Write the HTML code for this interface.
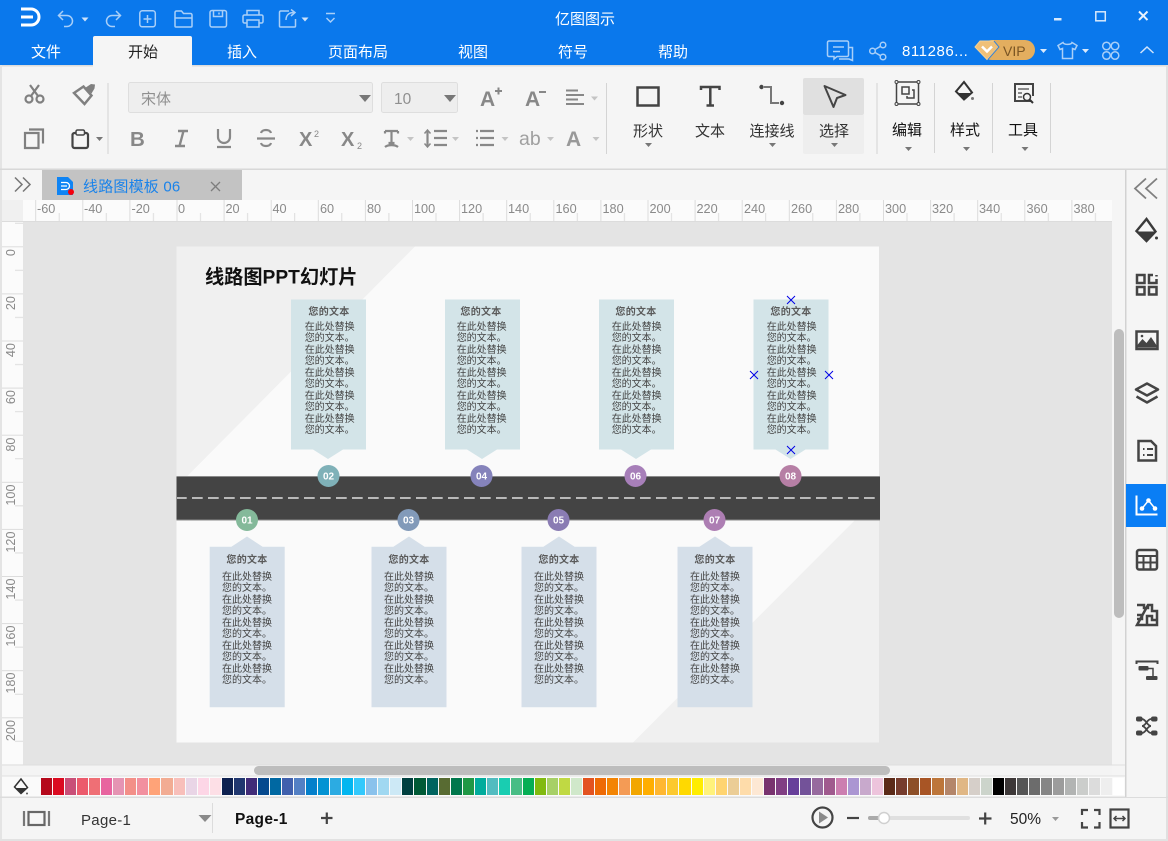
<!DOCTYPE html>
<html lang="zh">
<head>
<meta charset="utf-8">
<title>亿图图示</title>
<style>
html,body{margin:0;padding:0;width:1168px;height:841px;overflow:hidden;background:#f5f5f5}
body{position:relative;font-family:"Liberation Sans","Noto Sans CJK SC",sans-serif}
svg{position:absolute;left:0;top:0}
svg text{font-family:"Liberation Sans","Noto Sans CJK SC",sans-serif}
.c{position:absolute;width:76px;color:#444;font-size:10px;font-family:"Liberation Sans","Noto Sans CJK SC",sans-serif}
.c b{position:absolute;left:0;width:76px;text-align:center;line-height:12px;color:#5a5a5a;letter-spacing:.3px;font-weight:700}
.c p{position:absolute;margin:0;line-height:11.45px;white-space:nowrap}
.u{top:307px}.u p{top:15px;left:13.7px}
.d{top:555px}.d p{top:17px;left:13px}
.pal{position:absolute;left:41px;top:778px;width:1085px;height:18px;display:flex}
.pal i{display:block;width:11.05px;margin-right:1px;height:17px;flex:none}
</style>
</head>
<body>
<svg width="1168" height="841" viewBox="0 0 1168 841">
<defs>
<path id="a" d="M-3.5 0h7L0 4z"/>
<pattern id="hr" patternUnits="userSpaceOnUse" x="35.2" y="200" width="47.1" height="21">
<path d="M.5 0V21M24 13V21" stroke="#dcdcdc" fill="none"/>
</pattern>
<pattern id="vr" patternUnits="userSpaceOnUse" x="2" y="246.3" width="21" height="47.1">
<path d="M0 .5H21M13 24H21" stroke="#dcdcdc" fill="none"/>
</pattern>
</defs>

<!-- title bar -->
<rect width="1168" height="65" fill="#0a78ec"/>
<path d="M21 9h10a8 8 0 0 1 0 16H21M21 17h12" fill="none" stroke="#fff" stroke-width="3"/>
<g fill="none" stroke="#a9cff8" stroke-width="1.5">
<path d="M63 11l-4.500 4.500L63 20M59 15.500h8a5 5 0 0 1 0 11h-3"/>
<path d="M116 11l4.500 4.500L116 20M120 15.500h-8a5 5 0 0 0 0 11h3"/>
<rect x="139.800" y="10.800" width="15.500" height="16" rx="2.500"/><path d="M147.500 15v8M143.500 19h8"/>
<path d="M175 26V12.500a1.500 1.500 0 0 1 1.500-1.500h5l2 2.500h7a1.500 1.500 0 0 1 1.500 1.500V26a1 1 0 0 1-1 1h-15a1 1 0 0 1-1-1zM175 18h17.500"/>
<rect x="210" y="10.500" width="16.500" height="16.500" rx="2"/><path d="M213.500 10.500v6h9v-6M219 12.500v2"/>
<path d="M247 15v-4.500h12V15M247 23h-2.500a1.500 1.500 0 0 1-1.500-1.500V16.500a1.500 1.500 0 0 1 1.500-1.500h17a1.500 1.500 0 0 1 1.500 1.500v5a1.500 1.500 0 0 1-1.500 1.500H259M247 20h12v7h-12z"/>
<path d="M289 11h-8.500a1.500 1.500 0 0 0-1 1.500V26a1 1 0 0 0 1 1h14a1 1 0 0 0 1-1v-7M286 20c0-5 3-7.500 8-7.500M291 9.500l4 3-4 3.500"/>
<path d="M326 13.500h9M326.500 18l4 4 4-4"/>
</g>
<use href="#a" x="85" y="17.500" fill="#cfe3fb"/>
<use href="#a" x="305" y="17.500" fill="#cfe3fb"/>
<text x="585" y="24" text-anchor="middle" font-size="15" fill="#fff">亿图图示</text>
<rect x="1054" y="18" width="7.500" height="2.500" fill="#d8e9fc"/>
<rect x="1095.800" y="11.800" width="9.500" height="9" fill="none" stroke="#d8e9fc" stroke-width="1.500"/>
<path d="M1139 11.500l8.500 8.500M1147.500 11.500L1139 20" stroke="#e8f2fe" stroke-width="2" fill="none"/>

<!-- tabs -->
<path d="M93 38a2 2 0 0 1 2-2h95a2 2 0 0 1 2 2v27H93z" fill="#f5f5f5"/>
<g font-size="15" text-anchor="middle" fill="#fff">
<text x="46" y="57">文件</text>
<text x="143" y="57" fill="#222">开始</text>
<text x="242" y="57">插入</text>
<text x="358" y="57">页面布局</text>
<text x="473" y="57">视图</text>
<text x="573" y="57">符号</text>
<text x="673" y="57">帮助</text>
</g>
<g fill="none" stroke="#a9cff8" stroke-width="1.500">
<path d="M829 41h18a1.500 1.500 0 0 1 1.500 1.500V55a1.500 1.500 0 0 1-1.500 1.500h-10l-3 2.500v-2.500H829a1.500 1.500 0 0 1-1.500-1.500V42.500A1.500 1.500 0 0 1 829 41z"/>
<path d="M833 47h11M833 51.500h7M848.500 47.500h4v13l-3.500-1.500h-10"/>
<circle cx="872.500" cy="51" r="2.800"/><circle cx="883" cy="45" r="2.800"/><circle cx="883" cy="57" r="2.800"/>
<path d="M875 49.500l5.500-3.200M875 52.500l5.500 3.200"/>
<path d="M1063 42.500l-5 3 2 4 2.500-1v10h10v-10l2.500 1 2-4-5-3c-.8 2.500-8 2.500-9 0z"/>
<circle cx="1106.500" cy="46" r="3.800"/><circle cx="1115" cy="46" r="3.800"/><circle cx="1106.500" cy="55.500" r="3.800"/><circle cx="1115" cy="55.500" r="3.800"/>
<path d="M1140.500 53l6.500-6 6.500 6" stroke="#cfe3fb"/>
</g>
<text x="902" y="56" font-size="15" letter-spacing=".55" fill="#fff">811286...</text>
<rect x="982" y="40" width="53" height="20" rx="10" fill="#e3ae5f"/>
<path d="M975 47l5-6h14l5 6-12 12.500z" fill="#efc078" stroke="#f3d193"/>
<path d="M982 46.500l5 5 5-5" fill="none" stroke="#fff" stroke-width="2.500"/>
<path d="M994 41l5 6-11 12.500" fill="none" stroke="#3d82cf" stroke-width="1"/>
<text x="1003" y="56" font-size="14" fill="#7a5523">VIP</text>
<use href="#a" x="1043.500" y="49" fill="#dbeafc"/>
<use href="#a" x="1085.500" y="49" fill="#dbeafc"/>

<!-- ribbon -->
<rect x="0" y="65" width="1168" height="105" fill="#f5f5f5"/>
<rect x="0" y="65" width="93" height="1.500" fill="#dcdcdc"/>
<rect x="192" y="65" width="976" height="1.500" fill="#dcdcdc"/>
<rect x="0" y="65" width="2" height="776" fill="#e4e4e4"/>
<rect x="1166" y="65" width="2" height="776" fill="#e0e0e0"/>
<rect x="0" y="168.500" width="1168" height="1.500" fill="#d8d8d8"/>
<g stroke="#d4d4d4" fill="none"><path d="M108 83V154M606.500 83V154M877 83V154M934.500 83V153M992.500 83V153M1050.500 83V153"/></g>

<g fill="none" stroke="#808080" stroke-width="2.200">
<circle cx="29" cy="99" r="3.500"/><circle cx="40" cy="99" r="3.500"/>
<path d="M31 96l8-11M38 96l-8-11"/>
<path d="M25 133h13.500v15H25zM29 129.500h14v14"/>
</g>
<path d="M74 93l9.500-6.500 8 9-7 8.500z" fill="none" stroke="#808080" stroke-width="2.500"/>
<path d="M85 88l6-4 4 .5-.5 4-3 5z" fill="#808080"/>
<rect x="72.500" y="133" width="15.500" height="15" rx="2" fill="none" stroke="#444" stroke-width="2.200"/>
<rect x="76" y="130" width="8.500" height="5" rx="1.500" fill="#f5f5f5" stroke="#444" stroke-width="1.500"/>
<use href="#a" x="99.500" y="137" fill="#777"/>

<rect x="128.500" y="82.500" width="244" height="30" rx="2" fill="#eee" stroke="#dedede"/>
<rect x="381.500" y="82.500" width="76" height="30" rx="2" fill="#eee" stroke="#dedede"/>
<text x="141" y="104" font-size="15" fill="#8f8f8f">宋体</text>
<text x="394" y="104" font-size="15.500" fill="#8f8f8f">10</text>
<path d="M359 95h12l-6 7z" fill="#777"/><path d="M444 95h12l-6 7z" fill="#777"/>

<g fill="#888">
<text x="480" y="106" font-size="21" font-weight="700">A</text><path d="M495 91h7M498.500 87.500v7" stroke="#888" stroke-width="2"/>
<text x="525" y="106" font-size="21" font-weight="700">A</text><path d="M539 92h7" stroke="#888" stroke-width="2"/>
<path d="M566 90.500h12M566 95h18M566 99.500h12M566 104h18" stroke="#888" stroke-width="2"/>
<use href="#a" x="594.500" y="96.500" fill="#c4c4c4"/>
<text x="130" y="146" font-size="20.500" font-weight="700">B</text>
<path d="M178 131h10M175 146h10M183.500 131l-4 15" fill="none" stroke="#888" stroke-width="2.400"/>
<path d="M218 129v8a6 6 0 0 0 12 0v-8M217 147h14" fill="none" stroke="#888" stroke-width="2.200"/>
<path d="M271 133c-1-4-9-4-10 0M261 143c1 4 9 4 10 0M257 138.500h18" fill="none" stroke="#888" stroke-width="2.200"/>
<text x="299" y="146" font-size="20" font-weight="700">X</text><text x="314" y="137" font-size="9">2</text>
<text x="341" y="146" font-size="20" font-weight="700">X</text><text x="357" y="149" font-size="9">2</text>
<path d="M385 131h13M385 131v2.500M398 131v2.500M391.500 131v12M388.500 143h6M385 147c3-2.500 10-2.500 13 0" fill="none" stroke="#888" stroke-width="2.200"/>
<use href="#a" x="410.500" y="137" fill="#c4c4c4"/>
<path d="M434 131h13M434 138h13M434 145h13M427.500 131v15" stroke="#888" stroke-width="2.200" fill="none"/>
<path d="M424.500 133.500l3-3.500 3 3.500M424.500 143.500l3 3.500 3-3.500" stroke="#888" stroke-width="1.500" fill="none"/>
<use href="#a" x="455.500" y="137" fill="#c4c4c4"/>
<path d="M480 131h14M480 138h14M480 145h14M476 131h2M476 138h2M476 145h2" stroke="#888" stroke-width="2.200"/>
<use href="#a" x="505" y="137" fill="#c4c4c4"/>
<text x="519" y="145" font-size="19.500" fill="#a0a0a0">ab</text>
<use href="#a" x="550.500" y="137" fill="#c4c4c4"/>
<text x="566" y="146" font-size="21" font-weight="700" fill="#999">A</text>
<use href="#a" x="596" y="137" fill="#c4c4c4"/>
</g>

<!-- shape group -->
<rect x="803" y="78" width="61" height="37" rx="2" fill="#e0e0e0"/>
<path d="M803 115h61v37a2 2 0 0 1-2 2h-57a2 2 0 0 1-2-2z" fill="#eee"/>
<rect x="637.500" y="87.500" width="21" height="18" fill="none" stroke="#444" stroke-width="2.500"/>
<path d="M701 90v-3h18.500v3M710.300 87v18.500M706.500 105.500h7.500" fill="none" stroke="#444" stroke-width="2.500"/>
<circle cx="761.500" cy="87" r="2.200" fill="#444"/><circle cx="782" cy="103" r="2.200" fill="#444"/>
<path d="M764 87h7v16h8" fill="none" stroke="#777" stroke-width="2"/>
<path d="M824.500 86l21 9-8.500 3-3.500 9z" fill="none" stroke="#444" stroke-width="2" stroke-linejoin="round"/>
<g fill="none" stroke="#444" stroke-width="1.500">
<rect x="896.500" y="82" width="22" height="22"/>
<rect x="902" y="87" width="7" height="7"/>
<path d="M912 90h2v8h-7v-2"/>
</g>
<g fill="#f5f5f5" stroke="#444"><circle cx="896.500" cy="82" r="1.500"/><circle cx="918.500" cy="82" r="1.500"/><circle cx="896.500" cy="104" r="1.500"/><circle cx="918.500" cy="104" r="1.500"/></g>
<path d="M964 82l8 10.500-8 7-8-8z" fill="none" stroke="#333" stroke-width="2"/>
<path d="M957 93l15 0-8 6z" fill="#333"/><circle cx="972.500" cy="98.500" r="1.500" fill="#777"/>
<path d="M1031 101h-16v-17h18v12" fill="none" stroke="#444" stroke-width="2"/>
<path d="M1018 89h11M1018 93h4M1018 97h4" stroke="#666" stroke-width="1.500"/>
<circle cx="1027" cy="97" r="3.500" fill="#f5f5f5" stroke="#333" stroke-width="1.500"/><path d="M1029.500 99.500l3.500 3.500" stroke="#333" stroke-width="2"/>
<g font-size="15" text-anchor="middle" fill="#333">
<text x="648" y="136">形状</text>
<text x="710" y="136">文本</text>
<text x="772" y="136">连接线</text>
<text x="834" y="136">选择</text>
<text x="907" y="135" fill="#111">编辑</text>
<text x="965" y="135" fill="#111">样式</text>
<text x="1023" y="135" fill="#111">工具</text>
</g>
<use href="#a" x="648.500" y="143" fill="#777"/>
<use href="#a" x="772.500" y="143" fill="#777"/>
<use href="#a" x="834.500" y="143" fill="#777"/>
<use href="#a" x="908.500" y="147" fill="#777"/>
<use href="#a" x="966.500" y="147" fill="#777"/>
<use href="#a" x="1025" y="147" fill="#777"/>

<!-- doc tab -->
<path d="M15 177.500l7 7-7 7M23 177.500l7 7-7 7" fill="none" stroke="#777" stroke-width="1.500"/>
<rect x="42" y="170" width="200" height="30" fill="#c3c3c3"/>
<path d="M57 177h11l5 5v13H57z" fill="#0f84f4"/>
<path d="M61 182.500h5a3.500 3.500 0 0 1 0 7h-5M61 186h6" fill="none" stroke="#fff" stroke-width="1.300"/>
<circle cx="71" cy="192" r="3" fill="#f5000d"/>
<text x="83" y="191.500" font-size="15" letter-spacing=".2" fill="#1a83ea">线路图模板 06</text>
<path d="M211 182l9 9M220 182l-9 9" stroke="#7d7d7d" stroke-width="1.300"/>

<!-- rulers -->
<rect x="2" y="200" width="1110" height="22" fill="#fbfbfb"/>
<rect x="23" y="200" width="1089" height="21" fill="url(#hr)"/>
<rect x="2" y="200" width="21" height="21" fill="#f0f0f0"/>
<rect x="2" y="221" width="1110" height="1.500" fill="#dcdcdc"/>
<rect x="2" y="222" width="21" height="543" fill="#fbfbfb"/>
<rect x="2" y="222" width="21" height="543" fill="url(#vr)"/>
<g font-size="12.700" fill="#8a8a8a">
<text x="37" y="213">-60</text><text x="84" y="213">-40</text><text x="131.500" y="213">-20</text><text x="178" y="213">0</text>
<text x="225.500" y="213">20</text><text x="272.500" y="213">40</text><text x="320" y="213">60</text><text x="367" y="213">80</text>
<text x="414" y="213">100</text><text x="461" y="213">120</text><text x="508" y="213">140</text><text x="555.500" y="213">160</text>
<text x="602.500" y="213">180</text><text x="649.500" y="213">200</text><text x="696.500" y="213">220</text><text x="744" y="213">240</text>
<text x="791" y="213">260</text><text x="838" y="213">280</text><text x="885" y="213">300</text><text x="932" y="213">320</text>
<text x="979" y="213">340</text><text x="1026.500" y="213">360</text><text x="1073.500" y="213">380</text>
</g>
<g font-size="12.700" fill="#8a8a8a" text-anchor="end">
<text transform="translate(15 249) rotate(-90)">0</text>
<text transform="translate(15 296) rotate(-90)">20</text>
<text transform="translate(15 343) rotate(-90)">40</text>
<text transform="translate(15 390) rotate(-90)">60</text>
<text transform="translate(15 437.500) rotate(-90)">80</text>
<text transform="translate(15 484.500) rotate(-90)">100</text>
<text transform="translate(15 531.500) rotate(-90)">120</text>
<text transform="translate(15 578.500) rotate(-90)">140</text>
<text transform="translate(15 625.500) rotate(-90)">160</text>
<text transform="translate(15 672.500) rotate(-90)">180</text>
<text transform="translate(15 720) rotate(-90)">200</text>
</g>

<!-- canvas -->
<rect x="23" y="222" width="1089" height="543" fill="#e4e4e4"/>
<rect x="176.500" y="246.500" width="702.500" height="496" fill="#fafafa"/>
<path d="M176.500 246.500H415L176.500 487z" fill="#f0f0f0"/>
<path d="M879 742.500H633L879 496z" fill="#f0f0f0"/>
<rect x="176.500" y="476" width="703.500" height="44.500" fill="#444"/>
<path d="M176.500 476.500H880M176.500 520H880" stroke="#8a8a8a"/>
<path d="M177 498H876" stroke="#fff" stroke-width="1.200" stroke-dasharray="10.700 5.300" stroke-dashoffset="1"/>

<text x="205" y="283.500" font-size="19.200" font-weight="700" fill="#111">线路图PPT幻灯片</text>

<g fill="#d3e4e8">
<path d="M291 299.500h75v150h-23l-15 9.500-15-9.500h-22z"/>
<path d="M445 299.500h75v150h-23l-15 9.500-15-9.500h-22z"/>
<path d="M599 299.500h75v150h-23l-15 9.500-15-9.500h-22z"/>
<path d="M753.500 299.500h75v150h-23l-15 9.500-15-9.500h-22z"/>
</g>
<g fill="#d5dfe9">
<path d="M209.700 546.700h75v160.500h-75zM231 547l16-10.500 16 10.500z"/>
<path d="M371.500 546.700h75v160.500h-75zM393 547l16-10.500 16 10.500z"/>
<path d="M521.500 546.700h75v160.500h-75zM543 547l16-10.500 16 10.500z"/>
<path d="M677.500 546.700h75v160.500h-75zM699 547l16-10.500 16 10.500z"/>
</g>
<circle cx="328.500" cy="476" r="11" fill="#7fb1b8"/>
<circle cx="481.500" cy="476" r="11" fill="#8583bb"/>
<circle cx="635.500" cy="476" r="11" fill="#a77fb9"/>
<circle cx="790.500" cy="476" r="11" fill="#b67fa5"/>
<circle cx="247" cy="520" r="11" fill="#84b99a"/>
<circle cx="408.500" cy="520" r="11" fill="#829ab9"/>
<circle cx="558.500" cy="520" r="11" fill="#8a7cb3"/>
<circle cx="714.500" cy="520" r="11" fill="#ad7eb3"/>
<g font-size="10" font-weight="700" fill="#fff" text-anchor="middle">
<text x="328.500" y="479.500">02</text><text x="481.500" y="479.500">04</text><text x="635.500" y="479.500">06</text><text x="790.500" y="479.500">08</text>
<text x="247" y="523.500">01</text><text x="408.500" y="523.500">03</text><text x="558.500" y="523.500">05</text><text x="714.500" y="523.500">07</text>
</g>

<!-- scrollbars -->
<rect x="1112" y="222" width="13" height="554" fill="#f5f5f5"/>
<rect x="1114" y="329" width="10" height="289" rx="5" fill="#bdbdbd"/>
<rect x="2" y="765" width="1110" height="11" fill="#f4f4f4"/>
<rect x="254" y="766" width="636" height="9" rx="4.500" fill="#bdbdbd"/>
<rect x="2" y="764.500" width="1123" height="1" fill="#dedede"/>

<!-- palette row -->
<rect x="2" y="776" width="1123" height="21" fill="#fafafa"/>
<rect x="2" y="775.500" width="1123" height="1" fill="#e0e0e0"/>
<rect x="0" y="796.500" width="1168" height="1.500" fill="#dcdcdc"/>
<path d="M21 779l6.500 8.500-6.500 6-6.500-6.500z" fill="none" stroke="#333" stroke-width="1.500"/>
<path d="M15.500 788h11.500l-6 5.500z" fill="#333"/><circle cx="27" cy="793.500" r="1" fill="#555"/>

<!-- right panel -->
<rect x="1126" y="170" width="40" height="627" fill="#f5f5f5"/>
<rect x="1125" y="170" width="1.500" height="627" fill="#d2d2d2"/>
<path d="M1146 178.500l-11 10 11 10M1157 178.500l-11 10 11 10" fill="none" stroke="#808080" stroke-width="1.800"/>
<path d="M1146.500 219l9 12.500-9 9.500-10-10z" fill="none" stroke="#3a3a3a" stroke-width="2.400"/>
<path d="M1137.500 231.500h17l-8 9z" fill="#3a3a3a"/><circle cx="1156.500" cy="238" r="1.500" fill="#3a3a3a"/>
<g fill="none" stroke="#444" stroke-width="2.500">
<rect x="1137" y="275" width="7.500" height="8"/><rect x="1137" y="287" width="7.500" height="7.500"/><rect x="1149" y="287" width="7.500" height="7.500"/>
<path d="M1153 275h-4v8h7.500v-4M1156.500 275v1.500"/>
<rect x="1136.500" y="331.500" width="21" height="17.500"/>
<path d="M1147 395.500l11-6-11-6-11 6zM1136.500 396.500l10.500 6 10.500-6" stroke-linejoin="round"/>
<path d="M1138.500 441h12.500l5 5v14.500h-17.500z"/>
<path d="M1143 449h1.500M1147 449h6M1143 455h1.500M1147 455h6" stroke-width="2"/>
<rect x="1137" y="550" width="20" height="19.500" rx="2"/><path d="M1137 556h20M1137 562.500h20M1143.500 556v13M1150.500 556v13" stroke-width="2"/>
<path d="M1137 605h7v3h4v-3h0M1148 605h4v6h5v14h-20z"/><path d="M1137 615h5v4h-5M1157 620h-5v-4h-5v9"/>
<path d="M1136.500 664v-2.500h21v2.500" stroke-width="2"/>
</g>
<path d="M1136.500 346l6-7 4 4 4.500-6 6 9v1.500h-20.500z" fill="#444"/><circle cx="1142" cy="336" r="1.300" fill="#444"/>
<rect x="1138.500" y="666" width="10" height="4.500" rx="1" fill="#444"/>
<rect x="1146" y="676" width="11.500" height="4" rx="1" fill="#444"/>
<path d="M1148 668.500h5v8" fill="none" stroke="#444" stroke-width="1.500"/>
<g fill="#444"><rect x="1136" y="716.500" width="6.500" height="5" rx="2"/><rect x="1151" y="716.500" width="6.500" height="5" rx="2"/><rect x="1136" y="730.500" width="6.500" height="5" rx="2"/><rect x="1151" y="730.500" width="6.500" height="5" rx="2"/></g>
<path d="M1142 719c4 0 5 7 9 7M1151 719c-4 0-5 7-9 7M1142 733c4 0 5-7 9-7M1151 733c-4 0-5-7-9-7" fill="none" stroke="#444" stroke-width="1.800"/>
<rect x="1126" y="484" width="40" height="43" fill="#0a7ef5"/>
<path d="M1136.500 495.500v19h21" fill="none" stroke="#fff" stroke-width="2"/>
<path d="M1142 508.500l6.500-8 6.500 8" fill="none" stroke="#fff" stroke-width="1.500"/>
<circle cx="1142" cy="508.500" r="2.300" fill="#fff"/><circle cx="1148.500" cy="500.500" r="2.300" fill="#fff"/><circle cx="1155" cy="508.500" r="2.300" fill="#fff"/>

<!-- status bar -->
<rect x="2" y="798" width="1164" height="41" fill="#f5f5f5"/>
<rect x="0" y="839" width="1168" height="2" fill="#e2e2e2"/>
<rect x="28.500" y="812" width="16" height="13" fill="none" stroke="#666" stroke-width="2.200"/>
<path d="M24 811v15M49 811v15" stroke="#777" stroke-width="2.200"/>
<text x="81" y="825" font-size="15" fill="#333" letter-spacing=".3">Page-1</text>
<path d="M198.500 815h13l-6.500 7z" fill="#8a8a8a"/>
<path d="M212.500 803V833" stroke="#dcdcdc"/>
<text x="235" y="824" font-size="15.500" font-weight="700" fill="#111" letter-spacing=".3">Page-1</text>
<path d="M321 818h11.500M326.800 812.500V824" stroke="#444" stroke-width="2.200"/>
<circle cx="822.500" cy="817.500" r="10" fill="none" stroke="#444" stroke-width="2.200"/>
<path d="M819 811.500l9 6-9 6z" fill="#8a8a8a"/>
<path d="M847 818h12" stroke="#444" stroke-width="2.200"/>
<rect x="868" y="816" width="102" height="4" rx="2" fill="#e0e0e0"/>
<rect x="868" y="816" width="14" height="4" rx="2" fill="#aaa"/>
<circle cx="884" cy="818" r="5.500" fill="#fff" stroke="#d0d0d0" stroke-width="1.500"/>
<path d="M979 818.500h12.500M985.200 812.500V824.500" stroke="#444" stroke-width="2.200"/>
<text x="1010" y="824" font-size="15.500" fill="#222">50%</text>
<use href="#a" x="1055.500" y="817" fill="#999"/>
<path d="M1082 815v-5h6M1094 810h5.500v5M1099.500 822v5.500h-5.500M1088 827.500h-6V822" fill="none" stroke="#444" stroke-width="2.200"/>
<rect x="1110.500" y="809.500" width="18" height="18" fill="none" stroke="#444" stroke-width="2.200"/>
<path d="M1114 818.500h11M1116.500 816l-2.500 2.500 2.500 2.500M1122.500 816l2.500 2.500-2.500 2.500" fill="none" stroke="#444" stroke-width="1.500"/>
</svg>

<div class="pal">
<i style="background:#b5081b"></i><i style="background:#db0a20"></i><i style="background:#c94f78"></i><i style="background:#ec5a6c"></i><i style="background:#ef6f75"></i><i style="background:#e8649f"></i><i style="background:#e594b3"></i><i style="background:#f38f88"></i><i style="background:#f2909f"></i><i style="background:#ffa378"></i><i style="background:#f2ac93"></i><i style="background:#f8bfba"></i><i style="background:#e9d5e6"></i><i style="background:#fdd6e6"></i><i style="background:#fddfe6"></i><i style="background:#0e2150"></i><i style="background:#20376f"></i><i style="background:#412c78"></i><i style="background:#05498e"></i><i style="background:#0068a2"></i><i style="background:#4060ad"></i><i style="background:#5380c4"></i><i style="background:#0480cb"></i><i style="background:#0393d3"></i><i style="background:#2cabe2"></i><i style="background:#02b6f0"></i><i style="background:#33c9fc"></i><i style="background:#8ac2ec"></i><i style="background:#a0d8f1"></i><i style="background:#cde9f6"></i>
<i style="background:#004040"></i><i style="background:#005a36"></i><i style="background:#00645f"></i><i style="background:#586b32"></i><i style="background:#00774c"></i><i style="background:#1f9845"></i><i style="background:#01ac9c"></i><i style="background:#52bcc0"></i><i style="background:#19cdb1"></i><i style="background:#48bd85"></i><i style="background:#05ae54"></i><i style="background:#81ba10"></i><i style="background:#a7d067"></i><i style="background:#c0d943"></i><i style="background:#d0e8ca"></i><i style="background:#e35320"></i><i style="background:#ee6a05"></i><i style="background:#f38403"></i><i style="background:#f49b55"></i><i style="background:#f2a600"></i><i style="background:#ffae00"></i><i style="background:#ffb731"></i><i style="background:#fcc92f"></i><i style="background:#ffd900"></i><i style="background:#ffed00"></i><i style="background:#fff27b"></i><i style="background:#ffd470"></i><i style="background:#ebcd96"></i><i style="background:#fedcaa"></i><i style="background:#fde8d4"></i>
<i style="background:#79336f"></i><i style="background:#813e83"></i><i style="background:#673f9a"></i><i style="background:#735299"></i><i style="background:#976a9e"></i><i style="background:#a05a8e"></i><i style="background:#cc7eb0"></i><i style="background:#ab96d2"></i><i style="background:#c8a9cc"></i><i style="background:#edc4dc"></i><i style="background:#5b2a18"></i><i style="background:#763c2d"></i><i style="background:#8d4f28"></i><i style="background:#a85525"></i><i style="background:#bd763a"></i><i style="background:#b4866a"></i><i style="background:#e0b785"></i><i style="background:#d6cfc9"></i><i style="background:#ccd4cb"></i><i style="background:#000"></i><i style="background:#3d3838"></i><i style="background:#565656"></i><i style="background:#6c6c6c"></i><i style="background:#868686"></i><i style="background:#9c9c9c"></i><i style="background:#b2b4b3"></i><i style="background:#cbcdcb"></i><i style="background:#dcdcdc"></i><i style="background:#eee"></i><i style="background:#fff"></i>
</div>

<div class="c u" style="left:291px"><b>您的文本</b><p>在此处替换<br>您的文本。<br>在此处替换<br>您的文本。<br>在此处替换<br>您的文本。<br>在此处替换<br>您的文本。<br>在此处替换<br>您的文本。</p></div>
<div class="c u" style="left:443px"><b>您的文本</b><p>在此处替换<br>您的文本。<br>在此处替换<br>您的文本。<br>在此处替换<br>您的文本。<br>在此处替换<br>您的文本。<br>在此处替换<br>您的文本。</p></div>
<div class="c u" style="left:598px"><b>您的文本</b><p>在此处替换<br>您的文本。<br>在此处替换<br>您的文本。<br>在此处替换<br>您的文本。<br>在此处替换<br>您的文本。<br>在此处替换<br>您的文本。</p></div>
<div class="c u" style="left:753px"><b>您的文本</b><p>在此处替换<br>您的文本。<br>在此处替换<br>您的文本。<br>在此处替换<br>您的文本。<br>在此处替换<br>您的文本。<br>在此处替换<br>您的文本。</p></div>
<div class="c d" style="left:209px"><b>您的文本</b><p>在此处替换<br>您的文本。<br>在此处替换<br>您的文本。<br>在此处替换<br>您的文本。<br>在此处替换<br>您的文本。<br>在此处替换<br>您的文本。</p></div>
<div class="c d" style="left:371px"><b>您的文本</b><p>在此处替换<br>您的文本。<br>在此处替换<br>您的文本。<br>在此处替换<br>您的文本。<br>在此处替换<br>您的文本。<br>在此处替换<br>您的文本。</p></div>
<div class="c d" style="left:521px"><b>您的文本</b><p>在此处替换<br>您的文本。<br>在此处替换<br>您的文本。<br>在此处替换<br>您的文本。<br>在此处替换<br>您的文本。<br>在此处替换<br>您的文本。</p></div>
<div class="c d" style="left:677px"><b>您的文本</b><p>在此处替换<br>您的文本。<br>在此处替换<br>您的文本。<br>在此处替换<br>您的文本。<br>在此处替换<br>您的文本。<br>在此处替换<br>您的文本。</p></div>

<svg width="1168" height="841" viewBox="0 0 1168 841" style="pointer-events:none">
<path d="M787 296l8 8M795 296l-8 8M750 371l8 8M758 371l-8 8M825 371l8 8M833 371l-8 8M787 446l8 8M795 446l-8 8" stroke="#0000e6" stroke-width="1" fill="none"/>
</svg>
</body>
</html>
